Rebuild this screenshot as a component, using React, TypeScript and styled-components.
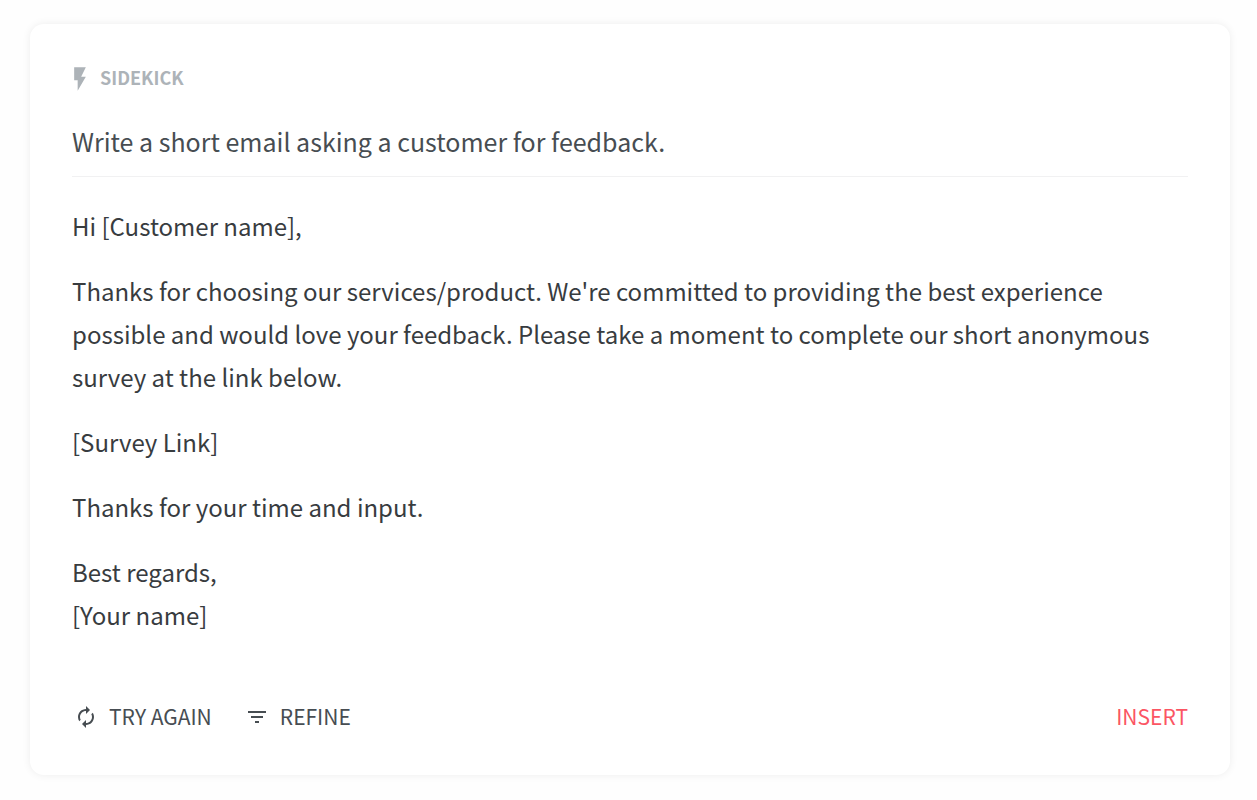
import React from "react";
import styled, { createGlobalStyle } from "styled-components";
import { MdAutorenew, MdFilterList, MdFlashOn } from "react-icons/md";

const GlobalStyle = createGlobalStyle`
  *, *::before, *::after { box-sizing: border-box; }
  body {
    margin: 0;
    background: #fefefe;
    font-family: "Source Sans Pro", "Noto Sans CJK SC", sans-serif;
    color: #383c3f;
  }
`;

const Page = styled.main`
  padding: 24px 27px 24px 30px;
`;

const Card = styled.section`
  display: flex;
  flex-direction: column;
  padding: 41px 42px 37px;
  border-radius: 14px;
  background: #fff;
  box-shadow: 0 0 8px rgba(0, 0, 0, 0.07);
`;

const Header = styled.header`
  display: flex;
  align-items: center;
  gap: 6px;
  height: 28px;
  margin-left: -6px;
  color: #adb3b8;
`;

const Title = styled.h1`
  margin: 0;
  padding-bottom: 4px;
  font-size: 18px;
  line-height: 24px;
  font-weight: 700;
`;

const Prompt = styled.input`
  width: 100%;
  height: 61px;
  margin-top: 23px;
  padding: 0 0 10px;
  border: 0;
  border-bottom: 1px solid #f1f1f2;
  outline: 0;
  background: transparent;
  color: #474d52;
  font-family: inherit;
  font-size: 25px;
`;

const Reply = styled.article`
  display: flex;
  flex-direction: column;
  gap: 22px;
  margin-top: 27px;
  font-size: 24px;
  line-height: 43px;
`;

const Paragraph = styled.p`
  margin: 0;
`;

const Actions = styled.footer`
  display: flex;
  align-items: center;
  gap: 33px;
  margin-top: 58px;
  padding-left: 2px;
`;

const Action = styled.button<{ $primary?: boolean }>`
  display: flex;
  align-items: center;
  gap: 11px;
  height: 44px;
  margin-left: ${(p) => (p.$primary ? "auto" : "0")};
  padding: 0;
  border: 0;
  background: none;
  color: ${(p) => (p.$primary ? "#fb5563" : "#474d52")};
  font-family: inherit;
  font-size: 21px;
  cursor: pointer;

  svg {
    margin-top: 2px;
  }
`;

export default function App() {
  return (
    <>
      <GlobalStyle />
      <Page>
        <Card>
          <Header>
            <MdFlashOn size={28} aria-hidden />
            <Title>SIDEKICK</Title>
          </Header>
          <Prompt
            aria-label="Prompt"
            defaultValue="Write a short email asking a customer for feedback."
          />
          <Reply>
            <Paragraph>Hi [Customer name],</Paragraph>
            <Paragraph>
              Thanks for choosing our services/product. We're committed to providing the best
              experience possible and would love your feedback. Please take a moment to complete
              our short anonymous survey at the link below.
            </Paragraph>
            <Paragraph>[Survey Link]</Paragraph>
            <Paragraph>Thanks for your time and input.</Paragraph>
            <Paragraph>
              Best regards,
              <br />
              [Your name]
            </Paragraph>
          </Reply>
          <Actions>
            <Action type="button">
              <MdAutorenew size={24} aria-hidden />
              TRY AGAIN
            </Action>
            <Action type="button">
              <MdFilterList size={24} aria-hidden />
              REFINE
            </Action>
            <Action type="button" $primary>
              INSERT
            </Action>
          </Actions>
        </Card>
      </Page>
    </>
  );
}
